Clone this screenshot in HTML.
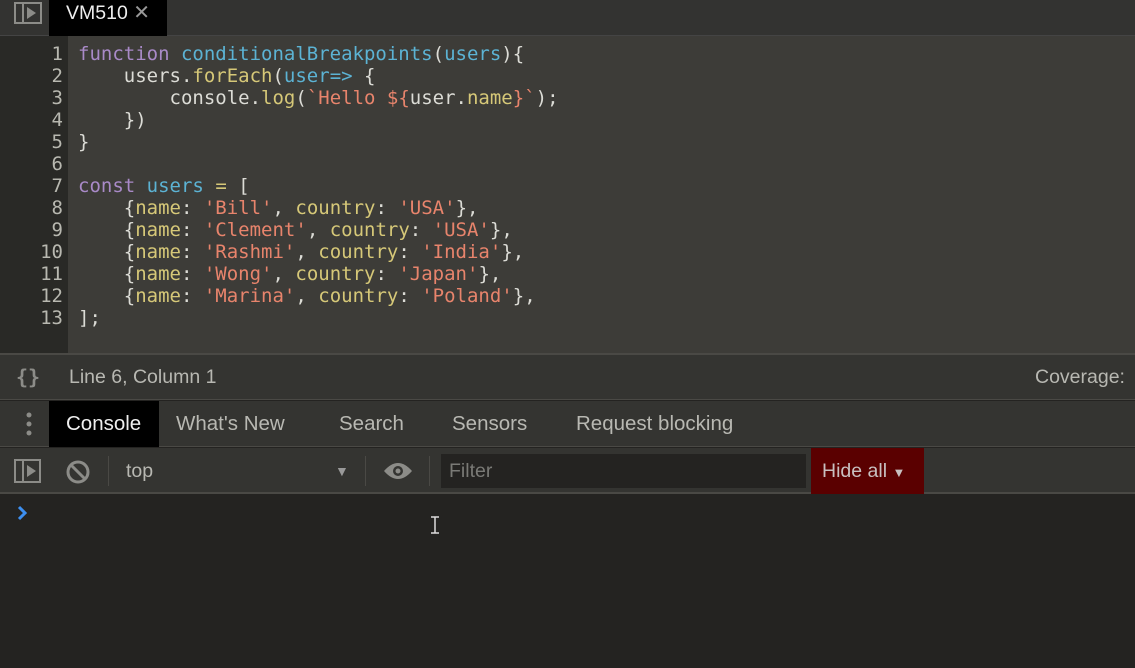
<!DOCTYPE html>
<html><head><meta charset="utf-8"><style>
*{margin:0;padding:0;box-sizing:border-box}
body{width:1135px;height:668px;overflow:hidden;background:#242321;font-family:"Liberation Sans","DejaVu Sans",sans-serif;position:relative;color:#c8c8c4}
.abs{position:absolute}
#top{left:0;top:0;width:1135px;height:36px;background:#333331;border-bottom:1px solid #444}
#tab{left:49px;top:0;width:118px;height:36px;background:#000;color:#eee;font-size:19.5px;line-height:26px;padding-left:17px}
#gut{left:0;top:36px;width:68px;height:318px;background:#292926;color:#b8b8b0;font-family:"DejaVu Sans Mono",monospace;font-size:19px;line-height:22px;text-align:right;padding:7px 5px 0 0}
#code{left:68px;top:36px;width:1067px;height:318px;background:#3d3c38;font-family:"DejaVu Sans Mono",monospace;font-size:19px;line-height:22px;padding:7px 0 0 10px;white-space:pre;color:#dcdcd6}
.k{color:#a98ac8}.d{color:#5cb3d4}.p{color:#d6c878}.s{color:#e8846c}
#sep{left:0;top:353px;width:1135px;height:2px;background:#4a4945}
#status{left:0;top:355px;width:1135px;height:45px;background:#343431;border-bottom:1px solid #4a4945}
#tabs{left:0;top:401px;width:1135px;height:46px;background:#343431;border-bottom:1px solid #4a4945;font-size:20.5px}
#tb{left:0;top:448px;width:1135px;height:46px;background:#343431;border-bottom:2px solid #4a4945}
.t{position:absolute;top:0;line-height:46px;color:#b8b8b2}
</style></head><body>
<div id="top" class="abs">
<svg class="abs" style="left:14px;top:2px" width="28" height="22"><rect x="1" y="1" width="26" height="20" fill="none" stroke="#8c8c88" stroke-width="2"/><line x1="9" y1="1" x2="9" y2="21" stroke="#8c8c88" stroke-width="2"/><path d="M13 5 L22 11 L13 17Z" fill="#8c8c88"/></svg>
</div>
<div id="tab" class="abs">VM510 <span style="color:#999;font-size:20px">✕</span></div>
<div id="gut" class="abs">1<br>2<br>3<br>4<br>5<br>6<br>7<br>8<br>9<br>10<br>11<br>12<br>13</div>
<div id="code" class="abs"><span class="k">function</span> <span class="d">conditionalBreakpoints</span>(<span class="d">users</span>){
    users.<span class="p">forEach</span>(<span class="d">user</span><span class="d">=&gt;</span> {
        console.<span class="p">log</span>(<span class="s">`Hello </span><span class="s">${</span>user.<span class="p">name</span><span class="s">}`</span>);
    })
}

<span class="k">const</span> <span class="d">users</span> <span class="p">=</span> [
    {<span class="p">name</span>: <span class="s">'Bill'</span>, <span class="p">country</span>: <span class="s">'USA'</span>},
    {<span class="p">name</span>: <span class="s">'Clement'</span>, <span class="p">country</span>: <span class="s">'USA'</span>},
    {<span class="p">name</span>: <span class="s">'Rashmi'</span>, <span class="p">country</span>: <span class="s">'India'</span>},
    {<span class="p">name</span>: <span class="s">'Wong'</span>, <span class="p">country</span>: <span class="s">'Japan'</span>},
    {<span class="p">name</span>: <span class="s">'Marina'</span>, <span class="p">country</span>: <span class="s">'Poland'</span>},
];</div>
<div id="sep" class="abs"></div>
<div id="status" class="abs">
<div class="t" style="left:16px;line-height:44px;font-family:'DejaVu Sans Mono',monospace;font-size:20px;font-weight:bold;color:#8c8c88">{}</div>
<div class="t" style="left:69px;line-height:44px;font-size:19.5px;color:#b8b8b2">Line 6, Column 1</div>
<div class="t" style="left:1035px;line-height:44px;font-size:19.5px;color:#b8b8b2">Coverage:</div>
</div>
<div id="tabs" class="abs">
<svg class="abs" style="left:26px;top:11px" width="6" height="24"><circle cx="3" cy="3" r="2.5" fill="#8c8c88"/><circle cx="3" cy="12" r="2.5" fill="#8c8c88"/><circle cx="3" cy="21" r="2.5" fill="#8c8c88"/></svg>
<div class="abs" style="left:49px;top:0;width:110px;height:46px;background:#000"></div>
<div class="t" style="left:66px;color:#eee">Console</div>
<div class="t" style="left:176px">What's New</div>
<div class="t" style="left:339px">Search</div>
<div class="t" style="left:452px">Sensors</div>
<div class="t" style="left:576px">Request blocking</div>
</div>
<div id="tb" class="abs">
<svg class="abs" style="left:14px;top:11px" width="28" height="24"><rect x="1" y="1" width="25" height="22" fill="none" stroke="#8c8c88" stroke-width="2"/><line x1="9" y1="1" x2="9" y2="23" stroke="#8c8c88" stroke-width="2"/><path d="M13 6 L22 12 L13 18Z" fill="#8c8c88"/></svg>
<svg class="abs" style="left:66px;top:12px" width="24" height="24"><circle cx="12" cy="12" r="10" fill="none" stroke="#8c8c88" stroke-width="3"/><line x1="5" y1="5" x2="19" y2="19" stroke="#8c8c88" stroke-width="3"/></svg>
<div class="abs" style="left:108px;top:8px;width:1px;height:30px;background:#4a4945"></div>
<div class="t" style="left:126px;font-size:19.5px">top</div>
<div class="t" style="left:335px;font-size:14px;color:#999">▼</div>
<div class="abs" style="left:365px;top:8px;width:1px;height:30px;background:#4a4945"></div>
<svg class="abs" style="left:383px;top:13px" width="30" height="20"><path d="M1 10 Q15 -6 29 10 Q15 26 1 10Z" fill="#8c8c88"/><circle cx="15" cy="10" r="5" fill="#343431"/><circle cx="15" cy="10" r="2.5" fill="#8c8c88"/></svg>
<div class="abs" style="left:429px;top:8px;width:1px;height:30px;background:#4a4945"></div>
<div class="abs" style="left:441px;top:6px;width:365px;height:34px;background:#242321;color:#7a7a76;font-size:19.5px;line-height:34px;padding-left:8px">Filter</div>
<div class="abs" style="left:811px;top:0;width:113px;height:46px;background:#5a0000;color:#c8c0c0;font-size:19.5px;line-height:46px;padding-left:11px">Hide all <span style="font-size:13px">▼</span></div>
</div>
<svg class="abs" style="left:16px;top:505px" width="12" height="16"><path d="M3 2 L9 8 L3 14" fill="none" stroke="#3d8ff0" stroke-width="3"/></svg>
<svg class="abs" style="left:429px;top:516px" width="12" height="18"><path d="M2 1 H10 M6 1 V17 M2 17 H10" fill="none" stroke="#ddd" stroke-width="1.5"/></svg>
</body></html>
